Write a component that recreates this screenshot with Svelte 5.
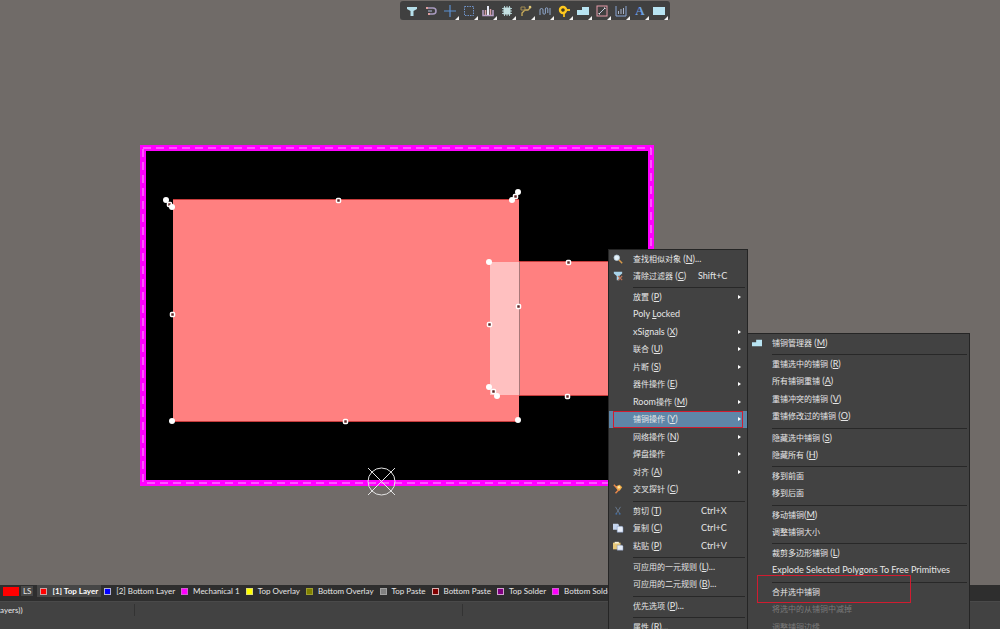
<script>
	const tools = ['filter', 'magnet', 'cross', 'area', 'align', 'chip', 'route', 'tune', 'via', 'polygon', 'line', 'graph', 'text', 'fill'];

	// "&" marks the accelerator letter, each inner list is a group
	const mainMenu = [
		[
			{ label: '查找相似对象 (&N)...', icon: 'search' },
			{ label: '清除过滤器 (&C)', keys: 'Shift+C', near: true, icon: 'clear' }
		],
		[
			{ label: '放置 (&P)', sub: true },
			{ label: 'Poly &Locked' },
			{ label: 'xSignals (&X)', sub: true },
			{ label: '联合 (&U)', sub: true },
			{ label: '片断 (&S)', sub: true },
			{ label: '器件操作 (&E)', sub: true },
			{ label: 'Room操作 (&M)', sub: true },
			{ label: '铺铜操作 (&Y)', sub: true, active: true },
			{ label: '网络操作 (&N)', sub: true },
			{ label: '焊盘操作', sub: true },
			{ label: '对齐 (&A)', sub: true },
			{ label: '交叉探针 (&C)', icon: 'probe' }
		],
		[
			{ label: '剪切 (&T)', keys: 'Ctrl+X', icon: 'cut' },
			{ label: '复制 (&C)', keys: 'Ctrl+C', icon: 'copy' },
			{ label: '粘贴 (&P)', keys: 'Ctrl+V', icon: 'paste' }
		],
		[
			{ label: '可应用的一元规则 (&L)...' },
			{ label: '可应用的二元规则 (&B)...' }
		],
		[{ label: '优先选项 (&P)...' }],
		[{ label: '属性 (&R)...' }]
	];

	const polygonMenu = [
		[{ label: '铺铜管理器 (&M)', icon: 'polygon' }],
		[
			{ label: '重铺选中的铺铜 (&R)' },
			{ label: '所有铺铜重铺 (&A)' },
			{ label: '重铺冲突的铺铜 (&V)' },
			{ label: '重铺修改过的铺铜 (&O)' }
		],
		[{ label: '隐藏选中铺铜 (&S)' }, { label: '隐藏所有 (&H)' }],
		[{ label: '移到前面' }, { label: '移到后面' }],
		[{ label: '移动铺铜(&M)' }, { label: '调整铺铜大小' }],
		[{ label: '裁剪多边形铺铜 (&L)' }, { label: 'Explode Selected Polygons To Free Primitives' }],
		[
			{ label: '合并选中铺铜', marked: true },
			{ label: '将选中的从铺铜中减掉', disabled: true },
			{ label: '调整铺铜边缘', disabled: true }
		]
	];

	const layers = [
		{ name: '[1] Top Layer', color: '#ff0000', edge: '#d0a0a0' },
		{ name: '[2] Bottom Layer', color: '#0000ff', edge: '#b0b0d8' },
		{ name: 'Mechanical 1', color: '#ff00ff', edge: '#d060d0' },
		{ name: 'Top Overlay', color: '#ffff00', edge: '#e0e070' },
		{ name: 'Bottom Overlay', color: '#808000', edge: '#a0a030' },
		{ name: 'Top Paste', color: '#808080', edge: '#a0a0a0' },
		{ name: 'Bottom Paste', color: '#800000', edge: '#d8b0b0' },
		{ name: 'Top Solder', color: '#800080', edge: '#d0a0d0' },
		{ name: 'Bottom Solder', color: '#ff00ff', edge: '#d060d0' }
	];

	let current = $state(0);

	const solidDots = [[166, 200], [172, 207], [512, 200], [172, 421], [518, 420], [518, 192], [489, 262], [489, 387], [497, 396]];
	const openDots = [[338, 200], [172, 314], [345, 421], [518, 306], [489, 324], [568, 262], [567, 396], [169, 204], [515, 196], [493, 391]];

	// Latin prefix, Chinese name, text before the accelerator, accelerator, rest
	function parts(label) {
		const [, latin, name, open, key, rest] = label.match(/^([A-Za-z]*)([\u4e00-\u9fff]*)([^&]*)&?(.?)(.*)$/);
		return { latin, name, open, key, rest };
	}
</script>

{#snippet icon(name)}
	<svg class="icon" viewBox="0 0 12 12" aria-hidden="true">
		{#if name === 'filter'}
			<path d="M1 2h10v2L7.5 6v5h-3V6L1 4z" fill="#b5dfea" />
		{:else if name === 'magnet'}
			<path d="M2 3h6a3 3 0 0 1 0 6H4" fill="none" stroke="#a99bc0" stroke-width="1.5" />
			<path d="M1 3h2M3 9h2" stroke="#e0a0a0" stroke-width="1.8" />
			<path d="M3 6h4" stroke="#b0b8d8" />
		{:else if name === 'cross'}
			<path d="M6 0v12M0 6h12" stroke="#5b8fd0" stroke-width="1.2" />
		{:else if name === 'area'}
			<rect x="1.5" y="1.5" width="9" height="9" fill="none" stroke="#6f93c8" stroke-dasharray="1.5 1" />
		{:else if name === 'align'}
			<path d="M1 5v5.500h10V5" fill="none" stroke="#b8a0c8" stroke-width="1.5" />
			<path d="M3.5 5v5M8.5 4v6" stroke="#d8a0a8" stroke-width="1.5" />
			<path d="M6 1v9" stroke="#e4e8f4" stroke-width="2" />
		{:else if name === 'chip'}
			<path d="M3.5 1v10M6 1v10M8.500 1v10M1 3.5h10M1 6h10M1 8.5h10" stroke="#a9c7cb" />
			<rect x="2.5" y="2.5" width="7" height="7" fill="#c4e0e2" />
		{:else if name === 'route'}
			<path d="M2 11V8l3-3h3l3-3" fill="none" stroke="#c9ac5b" stroke-width="1.3" />
			<path d="M1 2h4v3H1z" fill="none" stroke="#a18a50" />
			<circle cx="10" cy="2" r="1.3" fill="#e0c878" />
		{:else if name === 'tune'}
			<path d="M1 10V5a1.5 1.5 0 0 1 3 0v3a1.2 1.2 0 0 0 2.4 0V4a1.2 1.2 0 0 1 2.4 0v4M11 3v7" fill="none" stroke="#8fa7cc" />
		{:else if name === 'via'}
			<path d="M6 5v7M6 5h6" stroke="#f1bd1c" stroke-width="1.8" />
			<circle cx="5" cy="5" r="3" fill="#453a20" stroke="#ffc91f" stroke-width="2.4" />
		{:else if name === 'polygon'}
			<path d="M0 5h5V2h7v8H0z" fill="#b8e4f2" />
		{:else if name === 'line'}
			<rect x="1" y="1" width="10" height="10" fill="none" stroke="#e59aa8" />
			<path d="M3 9l6-6" stroke="#c0c8dc" />
			<path d="M3 8v1h1M8 3h1v1" fill="none" stroke="#e8e8f0" />
		{:else if name === 'graph'}
			<path d="M1 1v10h10V1" fill="none" stroke="#86a4d4" />
			<path d="M3.5 9V6M6 9V4M8.5 9V3" stroke="#a8b4cc" />
		{:else if name === 'text'}
			<text x="6" y="10" text-anchor="middle" class="glyph">A</text>
		{:else if name === 'fill'}
			<rect x="0" y="2" width="12" height="8" fill="#b8e4f2" />
		{:else if name === 'search'}
			<path d="M7 7l4 4" stroke="#d89a4a" stroke-width="1.8" />
			<circle cx="4.5" cy="4.5" r="3.3" fill="#e4f2fa" stroke="#b4c8d6" />
		{:else if name === 'clear'}
			<path d="M1 1h10v2L7.5 6v5h-3V6L1 3z" fill="#a8d4ea" />
			<path d="M6 6l5 5M11 6l-5 5" stroke="#c07458" stroke-width="1.4" />
		{:else if name === 'probe'}
			<path d="M3 3l5-2 3 3-3 4-3-1z" fill="#f3b04a" />
			<path d="M1 1l4 4M7 7l-4 4" stroke="#e8874a" stroke-width="1.8" />
			<circle cx="7" cy="4" r="1.5" fill="#ffe9a8" />
		{:else if name === 'cut'}
			<path d="M3 1l5 8M9 1L4 9" stroke="#6d8199" />
			<path d="M3 9.5h2M7 9.5h2" stroke="#4478b8" stroke-width="1.6" />
		{:else if name === 'copy'}
			<path d="M0 1h6l1 1v6H0z" fill="#c5d5ee" />
			<path d="M5 4h6l1 1v6H5z" fill="#e8effa" stroke="#7d95c0" stroke-width=".6" />
		{:else if name === 'paste'}
			<path d="M0 2h9v8H0z" fill="#e8c878" />
			<path d="M2 1h5v2H2z" fill="#f6f0d8" />
			<path d="M5 5h6l1 1v5H5z" fill="#e4ecf8" stroke="#8090b0" stroke-width=".6" />
		{/if}
	</svg>
{/snippet}

{#snippet menu(groups)}
	{#each groups as group, g}
		{#if g > 0}<hr />{/if}
		<ul>
			{#each group as item}
				{@const label = parts(item.label)}
				<li>
					<button class="item" class:active={item.active} class:marked={item.marked} disabled={item.disabled} role="menuitem">
						<span class="slot">{#if item.icon}{@render icon(item.icon)}{/if}</span>
						<span class="label">{label.latin}<span class="name">{label.name}</span>{label.open}<u>{label.key}</u>{label.rest}</span>
						{#if item.keys}<span class="keys" class:near={item.near}>{item.keys}</span>{/if}
						{#if item.sub}<span class="arrow"></span>{/if}
					</button>
				</li>
			{/each}
		</ul>
	{/each}
{/snippet}

<div class="app">
	<main class="workspace">
		<svg class="board" aria-label="PCB">
			<rect x="143" y="148" width="508" height="335" fill="#000" stroke="#ff00ff" stroke-width="6" />
			<rect x="143" y="148" width="508" height="335" fill="none" stroke="#ffa8ff" stroke-dasharray="8 5" />
			<rect x="173" y="200" width="346" height="221" fill="#ff8080" />
			<rect x="490" y="262" width="150" height="133" fill="#ff8080" />
			<rect x="490" y="262" width="29" height="133" fill="#ffc0c0" />
			<path d="M173 199.5h346M173 421.5h346M519 395.5h121M519 261.5h121" stroke="#c83c3c" />
			<path d="M519.5 262v133" stroke="#a87878" />
			<path d="M166 200l6 7M512 200l6-8M489 387l8 9" stroke="#fff" />
			{#each openDots as [x, y]}
				<rect x={x - 1.5} y={y - 1.5} width="4" height="4" rx="1" fill="#602828" stroke="#fff" stroke-width="1.5" />
			{/each}
			{#each solidDots as [x, y]}
				<circle cx={x} cy={y} r="3" fill="#fff" />
			{/each}
			<g fill="none" stroke="#e4e4e4">
				<circle cx="381.5" cy="481.5" r="13.5" />
				<path d="M368 468l27 27M395 468l-27 27" />
			</g>
		</svg>

		<div class="toolbar" role="toolbar">
			{#each tools as tool, i}
				<button class="tool" class:more={i > 1} aria-label={tool}>{@render icon(tool)}</button>
			{/each}
		</div>
	</main>

	<nav class="layers">
		<button class="set"><span class="current"></span><span class="ls">LS</span></button>
		{#each layers as layer, i}
			<button class="layer" class:selected={current === i} onclick={() => (current = i)}>
				<span class="swatch" style="background: {layer.color}; border-color: {layer.edge};"></span>
				{layer.name}
			</button>
		{/each}
	</nav>

	<footer class="status">
		<span class="cell first">ayers))</span>
		<span class="cell second"></span>
	</footer>

	<div class="menu main" role="menu">{@render menu(mainMenu)}</div>
	<div class="menu polygons" role="menu">{@render menu(polygonMenu)}</div>
</div>

<style>
	:global(body) {
		background: #706b68;
	}

	.app {
		position: relative;
		display: flex;
		flex-direction: column;
		height: 100vh;
		overflow: hidden;
		font-family: Lato, "Noto Sans CJK SC", sans-serif;
		font-size: 8px;
		color: #e6e6e6;
	}

	button {
		font: inherit;
		color: inherit;
		background: none;
		border: 0;
		padding: 0;
		margin: 0;
	}

	.icon {
		display: block;
		width: 12px;
		height: 12px;
		overflow: visible;
	}

	.glyph {
		font-family: "Liberation Serif", serif;
		font-size: 13px;
		font-weight: bold;
		fill: #6c9fe0;
	}

	.workspace {
		position: relative;
		flex: 1;
		min-height: 0;
		background: #706b68;
	}

	.board {
		display: block;
		width: 100%;
		height: 100%;
	}

	.toolbar {
		position: absolute;
		top: 1px;
		left: 400px;
		display: flex;
		padding: 0 2px;
		background: #404040;
		border-radius: 3px;
	}

	.tool {
		position: relative;
		display: flex;
		align-items: center;
		justify-content: center;
		width: 19px;
		height: 19px;
	}

	.tool.more::after {
		content: '';
		position: absolute;
		right: 0;
		bottom: 0;
		border-left: 4px solid transparent;
		border-bottom: 4px solid #f0f0f0;
	}

	.layers {
		display: flex;
		height: 12px;
		padding-bottom: 4px;
		overflow: hidden;
		background: #2e2e2e;
		border-bottom: 1px solid #4a4a4a;
	}

	.set {
		display: flex;
		align-items: center;
		gap: 2px;
		padding: 0 4px 0 3px;
		flex: none;
	}

	.current {
		width: 16px;
		height: 9px;
		background: #ff0000;
	}

	.ls {
		padding: 0 2px;
		background: #484848;
	}

	.layer {
		display: flex;
		align-items: center;
		gap: 5px;
		flex: none;
		padding: 0 3px;
		white-space: nowrap;
	}

	.layer.selected {
		background: #464646;
		font-weight: bold;
		color: #fff;
	}

	.swatch {
		width: 7px;
		height: 7px;
		box-sizing: border-box;
		border: 1px solid;
	}

	.status {
		display: flex;
		height: 27px;
		background: #424242;
	}

	.cell {
		box-sizing: border-box;
		height: 12px;
		margin-top: 2px;
		line-height: 12px;
		border-right: 1px solid #333;
	}

	.cell.first {
		width: 135px;
	}

	.cell.second {
		width: 328px;
	}

	.menu {
		position: absolute;
		box-sizing: border-box;
		background: #424242;
		border: 1px solid #252525;
		font-size: 9px;
	}

	.menu .icon {
		width: 10px;
		height: 10px;
	}

	.menu.main {
		top: 249px;
		left: 608px;
		width: 140px;
	}

	.menu.polygons {
		top: 333px;
		left: 747px;
		width: 223px;
	}

	ul {
		list-style: none;
		margin: 0;
		padding: 0;
	}

	li {
		height: 18px;
	}

	li:nth-child(even) {
		height: 17px;
	}

	hr {
		box-sizing: border-box;
		height: 3px;
		margin: 0 2px 0 24px;
		border: 0;
		border-bottom: 1px solid #282828;
	}

	hr:nth-of-type(even) {
		height: 4px;
	}

	.item {
		position: relative;
		display: flex;
		align-items: center;
		box-sizing: border-box;
		width: 100%;
		height: 100%;
		padding: 0 6px 1px 4px;
		line-height: 16px;
		text-align: left;
		white-space: nowrap;
	}

	.item:hover:enabled,
	.item.active {
		background: #5f86a8;
	}

	.item:disabled {
		color: #7a7a7a;
	}

	.slot {
		width: 20px;
	}

	.label {
		flex: 1;
	}

	.name {
		font-size: 8px;
	}

	.keys {
		width: 40px;
	}

	.keys.near {
		width: 43px;
	}

	.arrow {
		border: 2px solid transparent;
		border-left: 3px solid #fff;
		border-right: 0;
	}

	.item.active::after,
	.item.marked::after {
		content: '';
		position: absolute;
		border: 1px solid #d01c30;
	}

	.item.active::after {
		inset: 0 4px;
	}

	.item.marked::after {
		top: -8px;
		left: 9px;
		width: 152px;
		height: 26px;
	}
</style>
